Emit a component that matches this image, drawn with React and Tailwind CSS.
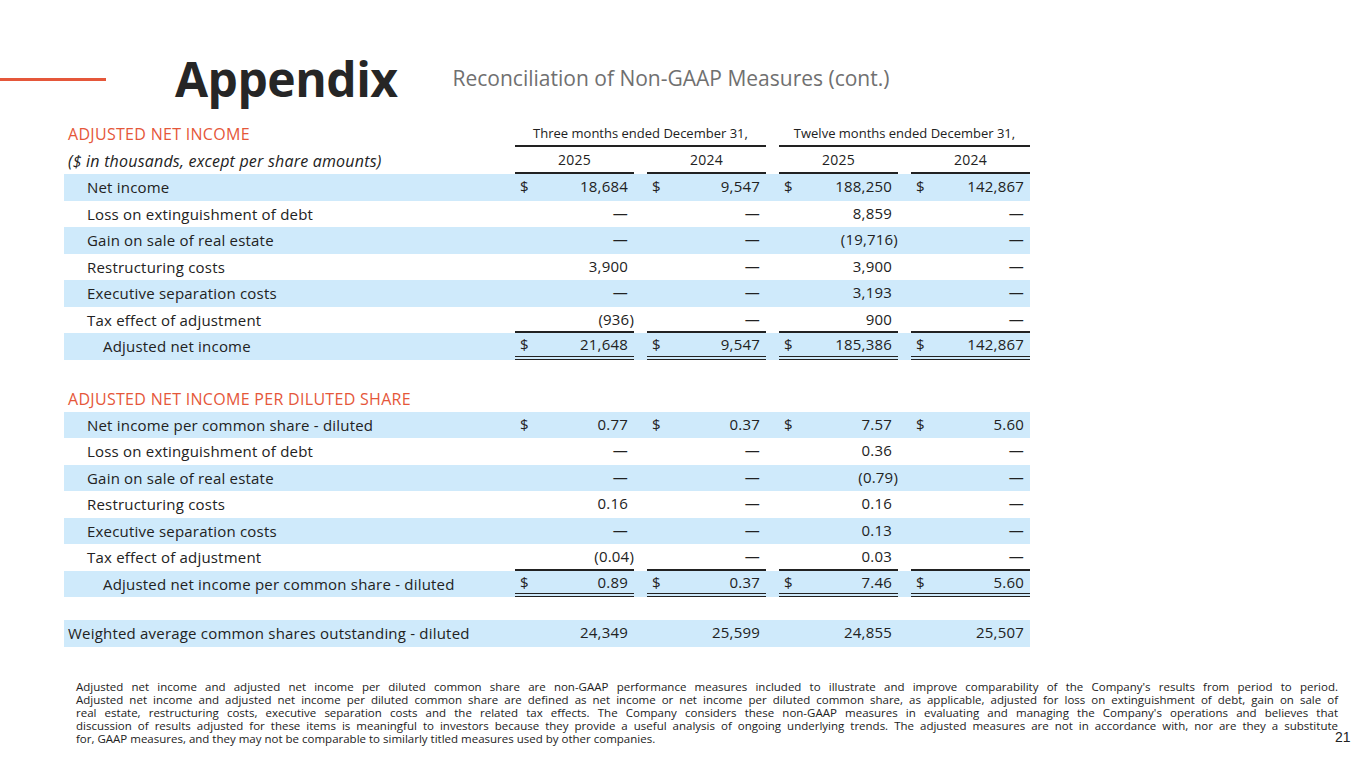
import React from "react";

// ----------------------------------------------------
// Table data
// ----------------------------------------------------
const incomeRows = [
  { label: "Net income", vals: ["18,684", "9,547", "188,250", "142,867"], dollar: true },
  { label: "Loss on extinguishment of debt", vals: ["—", "—", "8,859", "—"] },
  { label: "Gain on sale of real estate", vals: ["—", "—", "(19,716)", "—"] },
  { label: "Restructuring costs", vals: ["3,900", "—", "3,900", "—"] },
  { label: "Executive separation costs", vals: ["—", "—", "3,193", "—"] },
  { label: "Tax effect of adjustment", vals: ["(936)", "—", "900", "—"], under: true },
  { label: "Adjusted net income", vals: ["21,648", "9,547", "185,386", "142,867"], dollar: true, total: true },
];

const perShareRows = [
  { label: "Net income per common share - diluted", vals: ["0.77", "0.37", "7.57", "5.60"], dollar: true },
  { label: "Loss on extinguishment of debt", vals: ["—", "—", "0.36", "—"] },
  { label: "Gain on sale of real estate", vals: ["—", "—", "(0.79)", "—"] },
  { label: "Restructuring costs", vals: ["0.16", "—", "0.16", "—"] },
  { label: "Executive separation costs", vals: ["—", "—", "0.13", "—"] },
  { label: "Tax effect of adjustment", vals: ["(0.04)", "—", "0.03", "—"], under: true },
  { label: "Adjusted net income per common share - diluted", vals: ["0.89", "0.37", "7.46", "5.60"], dollar: true, total: true },
];

// footnote, one entry per printed line
const footnote = [
  "Adjusted net income and adjusted net income per diluted common share are non-GAAP performance measures included to illustrate and improve comparability of the Company's results from period to period.",
  "Adjusted net income and adjusted net income per diluted common share are defined as net income or net income per diluted common share, as applicable, adjusted for loss on extinguishment of debt, gain on sale of",
  "real estate, restructuring costs, executive separation costs and the related tax effects. The Company considers these non-GAAP measures in evaluating and managing the Company's operations and believes that",
  "discussion of results adjusted for these items is meaningful to investors because they provide a useful analysis of ongoing underlying trends. The adjusted measures are not in accordance with, nor are they a substitute",
  "for, GAAP measures, and they may not be comparable to similarly titled measures used by other companies.",
];

function Cell({ value, dollar, under, total, first }) {
  const border = total
    ? "border-b-[4px] border-double border-[#222]"
    : under
    ? "border-b-2 border-[#222]"
    : "border-b-2 border-transparent";
  const neg = value.endsWith(")");
  return (
    <div className={`w-[119px] ${first ? "" : "ml-[13px]"} h-full flex items-center justify-between pl-[5px] ${neg ? "pr-0" : "pr-[6px]"} ${border}`}>
      <span>{dollar ? "$" : ""}</span>
      <span>{value}</span>
    </div>
  );
}

function DataRow({ row, idx }) {
  const blue = idx % 2 === 0;
  return (
    <div className={`flex h-[26.5px] items-stretch ${blue ? "bg-[#cfeafb]" : ""}`}>
      <div className={`w-[451px] flex items-center ${row.total ? "pl-[39px]" : "pl-[23px]"}`}>{row.label}</div>
      {row.vals.map((v, i) => (
        <Cell key={i} value={v} dollar={row.dollar} under={row.under} total={row.total} first={i === 0} />
      ))}
    </div>
  );
}

export default function App() {
  return (
    <div
      className="w-[1365px] h-[768px] bg-white text-[#222] relative overflow-hidden"
      style={{ fontFamily: "'Open Sans', 'Noto Sans', sans-serif" }}
    >
      {/* Title */}
      <div className="flex items-center pt-[48px] h-[110px]">
        <div className="w-[106px] h-[3px] bg-[#e5573a]" />
        <h1 className="ml-[69px] text-[48px] font-bold tracking-[-0.5px] leading-none text-[#262626]">Appendix</h1>
        <div className="ml-[55px] text-[21px] text-[#707070]">Reconciliation of Non-GAAP Measures (cont.)</div>
      </div>

      {/* Table */}
      <div className="ml-[64px] w-[966px] mt-[12px] text-[15px] tracking-[0.2px]">
        <div className="flex h-[25px] items-end">
          <div className="w-[451px] pl-[4px] pb-[1px] text-[16px] tracking-[0.3px] text-[#e5573a]">ADJUSTED NET INCOME</div>
          <div className="w-[251px] text-center text-[13px] tracking-normal border-b-2 border-[#222] pb-[2px]">Three months ended December 31,</div>
          <div className="w-[251px] ml-[13px] text-center text-[13px] tracking-normal border-b-2 border-[#222] pb-[2px]">Twelve months ended December 31,</div>
        </div>
        <div className="flex h-[27px] items-stretch">
          <div className="w-[451px] pl-[4px] flex items-center italic text-[16px]">($ in thousands, except per share amounts)</div>
          {["2025", "2024", "2025", "2024"].map((y, i) => (
            <div key={i} className={`w-[119px] ${i === 0 ? "" : "ml-[13px]"} flex items-center justify-center text-[14px] border-b-2 border-[#222]`}>
              {y}
            </div>
          ))}
        </div>
        {incomeRows.map((r, i) => (
          <DataRow key={i} row={r} idx={i} />
        ))}

        <div className="h-[26px]" />
        <div className="h-[26px] flex items-center pl-[4px] text-[16px] tracking-[0.3px] text-[#e5573a]">ADJUSTED NET INCOME PER DILUTED SHARE</div>
        {perShareRows.map((r, i) => (
          <DataRow key={i} row={r} idx={i} />
        ))}

        <div className="h-[23px]" />
        <div className="flex h-[26.5px] items-stretch bg-[#cfeafb]">
          <div className="w-[451px] flex items-center pl-[4px]">Weighted average common shares outstanding - diluted</div>
          {["24,349", "25,599", "24,855", "25,507"].map((v, i) => (
            <Cell key={i} value={v} first={i === 0} />
          ))}
        </div>
      </div>

      {/* Footnote */}
      <div className="absolute left-[76px] top-[680px] w-[1262px] text-[11.5px] leading-[13px] text-[#222]">
        {footnote.map((line, i) => (
          <div key={i} className={i < footnote.length - 1 ? "text-justify [text-align-last:justify]" : ""}>
            {line}
          </div>
        ))}
      </div>

      {/* Page number */}
      <div
        className="absolute left-[1335px] top-[727px] text-[14px] text-[#222]"
        style={{ fontFamily: "'Liberation Sans', Arial, sans-serif" }}
      >
        21
      </div>
    </div>
  );
}
